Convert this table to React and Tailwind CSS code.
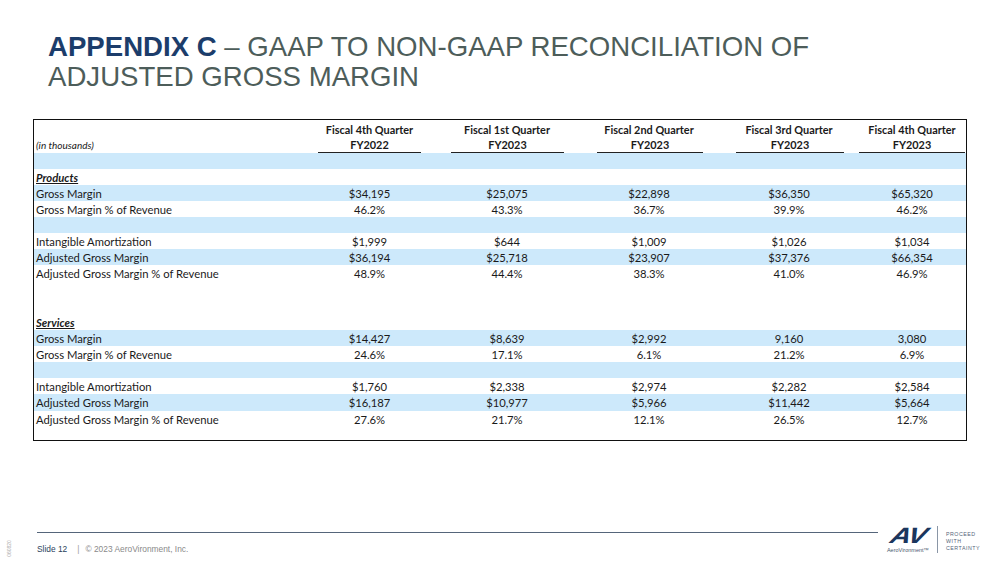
import React from "react";

const cols = [
  { q: "Fiscal 4th Quarter", fy: "FY2022", line: "mx-[14px]" },
  { q: "Fiscal 1st Quarter", fy: "FY2023", line: "ml-[16px] mr-[15px]" },
  { q: "Fiscal 2nd Quarter", fy: "FY2023", line: "ml-[18px] mr-[16px]" },
  { q: "Fiscal 3rd Quarter", fy: "FY2023", line: "ml-[17px] mr-[15px]" },
  { q: "Fiscal 4th Quarter", fy: "FY2023", line: "mx-0" },
];

const rows = [
  { blue: true },
  { label: "Products", head: true },
  { label: "Gross Margin", blue: true, v: ["$34,195", "$25,075", "$22,898", "$36,350", "$65,320"] },
  { label: "Gross Margin % of Revenue", v: ["46.2%", "43.3%", "36.7%", "39.9%", "46.2%"] },
  { blue: true },
  { label: "Intangible Amortization", v: ["$1,999", "$644", "$1,009", "$1,026", "$1,034"] },
  { label: "Adjusted Gross Margin", blue: true, v: ["$36,194", "$25,718", "$23,907", "$37,376", "$66,354"] },
  { label: "Adjusted Gross Margin % of Revenue", v: ["48.9%", "44.4%", "38.3%", "41.0%", "46.9%"] },
  {},
  {},
  { label: "Services", head: true },
  { label: "Gross Margin", blue: true, v: ["$14,427", "$8,639", "$2,992", "9,160", "3,080"] },
  { label: "Gross Margin % of Revenue", v: ["24.6%", "17.1%", "6.1%", "21.2%", "6.9%"] },
  { blue: true },
  { label: "Intangible Amortization", v: ["$1,760", "$2,338", "$2,974", "$2,282", "$2,584"] },
  { label: "Adjusted Gross Margin", blue: true, v: ["$16,187", "$10,977", "$5,966", "$11,442", "$5,664"] },
  { label: "Adjusted Gross Margin % of Revenue", v: ["27.6%", "21.7%", "12.1%", "26.5%", "12.7%"] },
];

const grid = "grid grid-cols-[270px_131px_144px_140px_140px_106px]";

function App() {
  return (
    <div className="relative w-[999px] h-[562px] bg-white overflow-hidden font-['Liberation_Sans',Arial,sans-serif]">
      {/* title */}
      <div className="pt-[32px] pl-[48px] text-[27.6px] leading-[30px] text-[#4d5d5a]">
        <div>
          <span className="font-bold text-[#1c3d6b]">APPENDIX C</span> – GAAP TO NON-GAAP RECONCILIATION OF
        </div>
        <div>ADJUSTED GROSS MARGIN</div>
      </div>

      {/* table */}
      <div className="ml-[33px] mt-[27px] w-[934px] h-[322px] border-[1.5px] border-[#111] font-['Lato',sans-serif] text-[11.25px] text-[#1a1a1a]">
        <div className={grid + " h-[17px] items-end font-bold text-[10.9px]"}>
          <div></div>
          {cols.map((c, i) => (
            <div key={i} className="text-center leading-[15px]">
              {c.q}
            </div>
          ))}
        </div>
        <div className={grid + " h-[15.5px] font-bold text-[10.9px]"}>
          <div className="pl-[2px] italic font-normal text-[10px] leading-[16px]">(in thousands)</div>
          {cols.map((c, i) => (
            <div key={i} className={"text-center leading-[15px] border-b border-[#222] " + c.line}>
              {c.fy}
            </div>
          ))}
        </div>
        {rows.map((r, i) => (
          <div key={i} className={grid + " h-[16.14px] leading-[17px] " + (r.blue ? "bg-[#cde9fb]" : "")}>
            <div className={"pl-[2px] " + (r.head ? "font-bold italic underline" : "")}>{r.label}</div>
            {(r.v || ["", "", "", "", ""]).map((v, j) => (
              <div key={j} className="text-center">
                {v}
              </div>
            ))}
          </div>
        ))}
      </div>

      {/* footer */}
      <div className="absolute left-[37px] top-[532px] w-[841px] h-px bg-[#55657a]"></div>
      <div className="absolute left-[37px] top-[544px] flex items-center gap-[6px] text-[8.4px] leading-[10px]">
        <span className="text-[#2b3f5c]">Slide 12</span>
        <span className="text-[#9a9a9a] ml-[4px]">|</span>
        <span className="text-[#8a8a8a]">© 2023 AeroVironment, Inc.</span>
      </div>
      <div className="absolute left-[1px] top-[546px] -rotate-90 text-[5px] text-[#aaa] leading-none">060820</div>

      {/* logo */}
      <div className="absolute left-[884px] top-[524px] flex items-start">
        <div className="flex flex-col items-center w-[48px]">
          <span className="italic font-black text-[22px] leading-[24px] tracking-[-1px] text-[#1b365d] skew-x-[-12deg] scale-x-130">AV</span>
          <span className="text-[5.5px] leading-[6px] text-[#4a5a70] -mt-[1px]">AeroVironment™</span>
        </div>
        <div className="ml-[5px] mt-[2px] w-px h-[27px] bg-[#8a96a6]"></div>
        <div className="ml-[8px] mt-[7px] flex flex-col text-[5.3px] leading-[7px] tracking-[0.5px] text-[#55657a]">
          <span>PROCEED</span>
          <span>WITH</span>
          <span>CERTAINTY</span>
        </div>
      </div>
    </div>
  );
}

export default App;
